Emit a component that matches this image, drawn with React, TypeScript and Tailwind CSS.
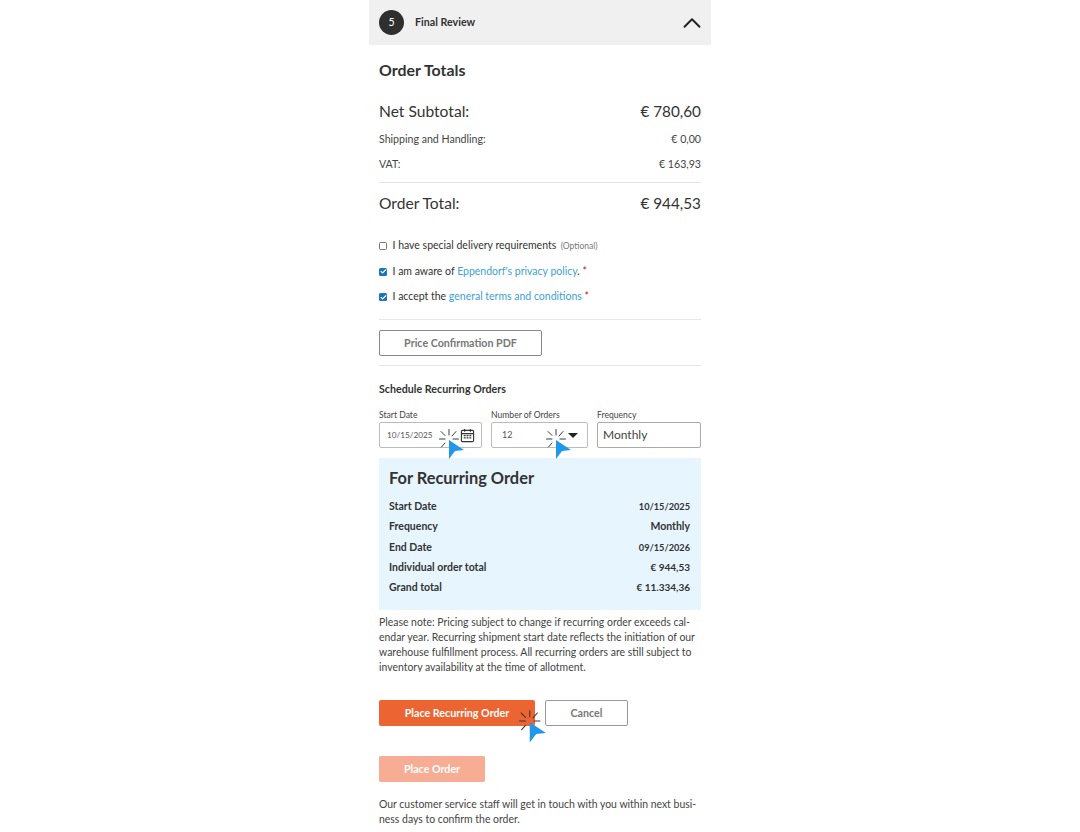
import { Check, ChevronUp } from "lucide-react";

const font = { fontFamily: 'Lato, "Noto Sans", sans-serif' };

// click marker drawn over the form fields
const ClickCursor = ({ className }: { className: string }) => (
  <svg viewBox="0 0 26 31" className={`absolute pointer-events-none ${className}`}>
    <g stroke="#3a3a3a" strokeWidth="1" strokeLinecap="round">
      <path d="M10 0.5v5.5" />
      <path d="M0.5 10h5.5" />
      <path d="M14 10h5.5" />
      <path d="M2 2.5l4 4" />
      <path d="M17 2.5l-4 4.5" />
      <path d="M2.5 18l3.5-4" />
    </g>
    <path d="M10 11l15 10-9 1-6 8z" fill="#2196ea" />
  </svg>
);

const Box = ({ checked }: { checked?: boolean }) =>
  checked ? (
    <span className="flex w-[8px] h-[8px] items-center justify-center rounded-[1.5px] bg-[#1a75bb]">
      <Check size={7} strokeWidth={4} className="text-white" />
    </span>
  ) : (
    <span className="block w-[8px] h-[8px] rounded-[1.5px] border border-[#777] bg-white" />
  );

const TotalRow = ({
  label,
  value,
  valueClass = "text-[10px]",
}: {
  label: string;
  value: string;
  valueClass?: string;
}) => (
  <div className="flex justify-between items-baseline h-[20px] leading-[20px] text-[10.5px] font-bold text-[#333]">
    <span>{label}</span>
    <span className={valueClass}>{value}</span>
  </div>
);

const App = () => {
  return (
    <div className="min-h-[832px] bg-white text-[#333]" style={font}>
      <div className="relative mx-auto w-[342px] h-[832px] overflow-hidden">
        <div className="flex items-center justify-between h-[45px] bg-[#f0f0f0] pl-[10px] pr-[4px]">
          <div className="flex items-center gap-[11px]">
            <span className="flex w-[25px] h-[25px] items-center justify-center rounded-full bg-[#2f2f2f] text-[10.5px] text-white">
              5
            </span>
            <span className="text-[10.7px] font-bold text-[#333]">Final Review</span>
          </div>
          <ChevronUp size={30} strokeWidth={1.5} className="text-[#222]" />
        </div>

        <div className="px-[10px]">
          <h2 className="mt-[14px] text-[15.9px] leading-[22px] font-bold text-[#333]">
            Order Totals
          </h2>

          <div className="flex justify-between items-baseline mt-[18px] h-[24px] leading-[24px] text-[#333]">
            <span className="text-[15.6px]">Net Subtotal:</span>
            <span className="text-[15.3px]">€ 780,60</span>
          </div>
          <div className="flex justify-between items-center mt-[7px] h-[20px] text-[10.6px] text-[#444]">
            <span>Shipping and Handling:</span>
            <span>€ 0,00</span>
          </div>
          <div className="flex justify-between items-center mt-[5px] h-[20px] text-[10.6px] text-[#444]">
            <span>VAT:</span>
            <span>€ 163,93</span>
          </div>
          <div className="mt-[7px] border-t border-[#e2e2e2]" />
          <div className="flex justify-between items-baseline mt-[8px] h-[24px] leading-[24px] text-[#333]">
            <span className="text-[15.6px]">Order Total:</span>
            <span className="text-[15.3px]">€ 944,53</span>
          </div>

          <div className="mt-[21px] flex flex-col gap-[5.5px] text-[10.5px] text-[#333]">
            <div className="flex items-center gap-[5.5px] h-[20px]">
              <Box />
              <span>I have special delivery requirements</span>
              <span className="-ml-[1px] text-[8.5px] text-[#777]">(Optional)</span>
            </div>
            <div className="flex items-center gap-[5.5px] h-[20px]">
              <Box checked />
              <span>
                I am aware of <span className="text-[#3d9fd8]">Eppendorf's privacy policy</span>.{" "}
                <span className="text-[#c8202f]">*</span>
              </span>
            </div>
            <div className="flex items-center gap-[5.5px] h-[20px]">
              <Box checked />
              <span>
                I accept the <span className="text-[#3d9fd8]">general terms and conditions</span>{" "}
                <span className="text-[#c8202f]">*</span>
              </span>
            </div>
          </div>

          <div className="mt-[12px] border-t border-[#e6e6e6]" />
          <button
            type="button"
            className="block mt-[10px] w-[163px] h-[26px] rounded-[2px] border border-[#888] bg-white text-[10.7px] font-bold text-[#777]"
          >
            Price Confirmation PDF
          </button>
          <div className="mt-[9px] border-t border-[#e6e6e6]" />

          <h3 className="mt-[15px] text-[10.7px] leading-[16px] font-bold text-[#333]">
            Schedule Recurring Orders
          </h3>

          <div className="relative flex mt-[12px] gap-[9px]">
            <div className="w-[103px]">
              <label className="block text-[8.6px] leading-[12px] text-[#444]">Start Date</label>
              <div className="flex items-center justify-between mt-[1px] h-[26px] rounded-[2px] border border-[#bbb] pl-[7px] pr-[6px] text-[8.2px] text-[#555]">
                <span>10/15/2025</span>
                <svg viewBox="0 0 16 16" className="w-[15px] h-[15px]" fill="none" stroke="#333" strokeWidth="1.2">
                  <rect x="1.5" y="2.5" width="13" height="12" rx="1.2" />
                  <path d="M1.5 6h13M5 1v3M11 1v3" />
                  <path d="M4 8.2h2M7 8.2h2M10 8.2h2M4 10.5h2M7 10.5h2M10 10.5h2" strokeWidth="1.4" />
                </svg>
              </div>
            </div>
            <div className="w-[97px]">
              <label className="block text-[8.6px] leading-[12px] text-[#444]">Number of Orders</label>
              <div className="flex items-center justify-between mt-[1px] h-[26px] rounded-[2px] border border-[#bbb] pl-[10px] pr-[9px] text-[9px] text-[#555]">
                <span>12</span>
                <span className="w-0 h-0 border-x-[5px] border-x-transparent border-t-[5px] border-t-[#222]" />
              </div>
            </div>
            <div className="flex-1">
              <label className="block text-[8.6px] leading-[12px] text-[#444]">Frequency</label>
              <div className="flex items-center mt-[1px] h-[26px] rounded-[2px] border border-[#aaa] px-[5px] text-[12px] text-[#444]">
                Monthly
              </div>
            </div>
            <ClickCursor className="left-[60px] top-[20px] w-[26px] h-[31px]" />
            <ClickCursor className="left-[167px] top-[20px] w-[26px] h-[31px]" />
          </div>

          <div className="mt-[10px] h-[152px] bg-[#e7f5fe] pl-[10px] pr-[11px] pt-[9px]">
            <h3 className="text-[16.4px] leading-[22px] font-bold text-[#333]">For Recurring Order</h3>
            <div className="mt-[7px] flex flex-col gap-[0.3px]">
              <TotalRow label="Start Date" value="10/15/2025" valueClass="text-[9.2px]" />
              <TotalRow label="Frequency" value="Monthly" valueClass="text-[10.5px]" />
              <TotalRow label="End Date" value="09/15/2026" valueClass="text-[9.2px]" />
              <TotalRow label="Individual order total" value="€ 944,53" />
              <TotalRow label="Grand total" value="€ 11.334,36" />
            </div>
          </div>

          <p className="mt-[5px] h-[57px] overflow-hidden whitespace-nowrap text-[10.45px] leading-[15px] text-[#444]">
            Please note: Pricing subject to change if recurring order exceeds cal-
            <br />
            endar year. Recurring shipment start date reflects the initiation of our
            <br />
            warehouse fulfillment process. All recurring orders are still subject to
            <br />
            inventory availability at the time of allotment.
          </p>

          <div className="relative flex mt-[28px] gap-[10px]">
            <button
              type="button"
              className="w-[156px] h-[26px] rounded-[2px] bg-[#eb6431] text-[10.7px] font-bold text-white"
            >
              Place Recurring Order
            </button>
            <button
              type="button"
              className="w-[83px] h-[26px] rounded-[2px] border border-[#999] bg-white text-[10.7px] font-bold text-[#777]"
            >
              Cancel
            </button>
            <ClickCursor className="left-[140px] top-[10px] w-[28px] h-[34px]" />
          </div>

          <button
            type="button"
            className="block mt-[30px] w-[106px] h-[26px] rounded-[2px] bg-[#f6ad93] text-[10.7px] font-bold text-white"
          >
            Place Order
          </button>

          <p className="mt-[15px] whitespace-nowrap text-[10.45px] leading-[15px] text-[#444]">
            Our customer service staff will get in touch with you within next busi-
            <br />
            ness days to confirm the order.
          </p>
        </div>
      </div>
    </div>
  );
};

export default App;
